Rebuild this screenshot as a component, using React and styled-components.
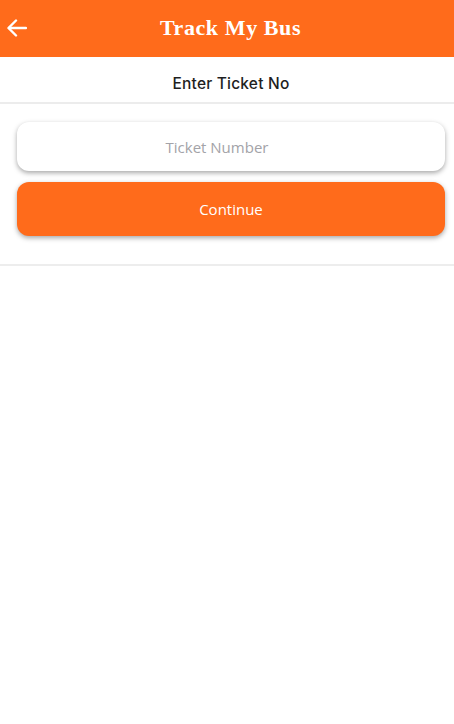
import React from "react";
import styled, { createGlobalStyle } from "styled-components";

const Global = createGlobalStyle`
  html, body { margin: 0; padding: 0; background: #fff; }
  * { box-sizing: border-box; }
`;

const Page = styled.div`
  width: 454px;
  min-height: 724px;
  background: #fff;
  font-family: "Open Sans", sans-serif;
`;

const Header = styled.header`
  height: 57px;
  background: #ff6b1b;
  display: flex;
  align-items: center;
  justify-content: center;
  position: relative;
`;

const BackButton = styled.button`
  position: absolute;
  left: 5px;
  top: 14px;
  width: 24px;
  height: 28px;
  padding: 0;
  border: none;
  background: transparent;
  display: flex;
  align-items: center;
  justify-content: center;
  cursor: pointer;
`;

const Title = styled.h1`
  margin: 0 0 1px 7px;
  color: #fff;
  font-family: "Liberation Serif", "DejaVu Serif", serif;
  font-weight: 700;
  font-size: 22px;
  letter-spacing: 0.6px;
`;

const SubHeader = styled.div`
  height: 47px;
  display: flex;
  align-items: center;
  justify-content: center;
  border-bottom: 2px solid #ececec;
  font-family: "Inter", "Open Sans", sans-serif;
  font-size: 15.5px;
  font-weight: 500;
  letter-spacing: 0.2px;
  color: #1f1f1f;
  padding: 7px 0 0 8px;
`;

const Form = styled.div`
  padding: 18px 9px 28px 17px;
  display: flex;
  flex-direction: column;
  gap: 11px;
  border-bottom: 2px solid #ededed;
`;

const Input = styled.input`
  height: 49px;
  width: 100%;
  border: none;
  outline: none;
  border-radius: 12px;
  background: #fff;
  box-shadow: 0 2px 5px rgba(0, 0, 0, 0.35);
  text-align: center;
  padding: 0 28px 0 0;
  font-family: "Open Sans", sans-serif;
  font-size: 15px;
  color: #333;
  &::placeholder { color: #a3a3a8; }
`;

const Button = styled.button`
  height: 54px;
  width: 100%;
  border: none;
  border-radius: 12px;
  background: #ff6b1b;
  color: #fff;
  box-shadow: 0 2px 5px rgba(0, 0, 0, 0.35);
  font-family: "Open Sans", sans-serif;
  font-size: 15px;
  cursor: pointer;
`;

export default function App() {
  return (
    <Page>
      <Global />
      <Header>
        <BackButton aria-label="Back">
          <svg width="20" height="18" viewBox="0 0 20 18" fill="none" stroke="#fff" strokeWidth="2.4" strokeLinecap="round" strokeLinejoin="round">
            <path d="M19 9H2" />
            <path d="M9 1.5L1.5 9L9 16.5" />
          </svg>
        </BackButton>
        <Title>Track My Bus</Title>
      </Header>
      <SubHeader>Enter Ticket No</SubHeader>
      <Form>
        <Input placeholder="Ticket Number" />
        <Button>Continue</Button>
      </Form>
    </Page>
  );
}
